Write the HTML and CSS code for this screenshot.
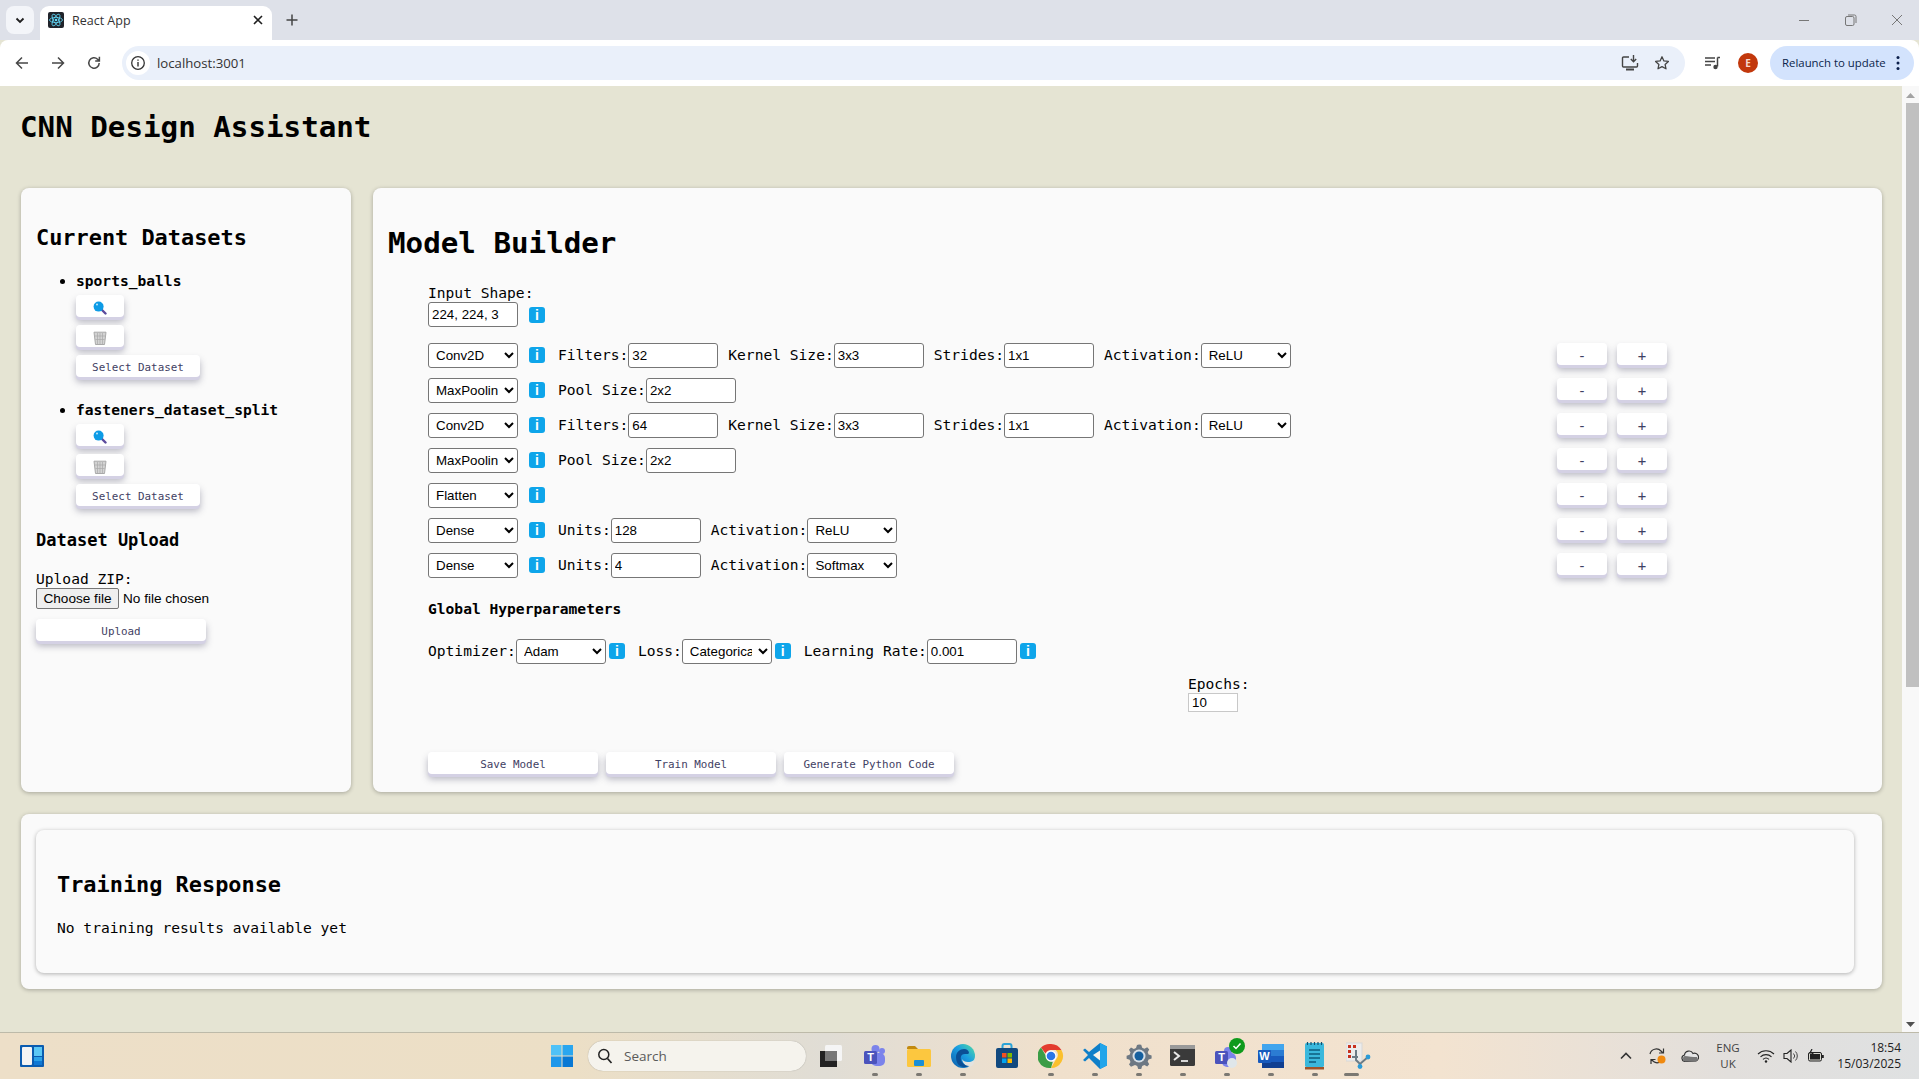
FILE: index.html
```html
<!DOCTYPE html>
<html lang="en">
<head>
    <meta charset="UTF-8">
    <title>React App</title>
    <link rel="stylesheet" href="styles.css">
</head>
<body>
    <!-- browser chrome -->
    <div class="tabstrip">
        <div class="tab-list"><svg width="12" height="12" viewBox="0 0 12 12"><path d="M2.500 4.500 6 8l3.500-3.500" fill="none" stroke="#1f1f1f" stroke-width="1.800"/></svg></div>
        <div class="tab">
            <svg class="favicon" width="16" height="16" viewBox="0 0 16 16"><rect width="16" height="16" rx="2" fill="#20232a"/><g fill="none" stroke="#61dafb" stroke-width=".8"><ellipse cx="8" cy="8" rx="6.500" ry="2.600"/><ellipse cx="8" cy="8" rx="6.500" ry="2.600" transform="rotate(60 8 8)"/><ellipse cx="8" cy="8" rx="6.500" ry="2.600" transform="rotate(120 8 8)"/></g><circle cx="8" cy="8" r="1.300" fill="#61dafb"/></svg>
            <span class="tab-title">React App</span>
            <svg class="tab-close" width="10" height="10" viewBox="0 0 10 10"><path d="M1 1l8 8M9 1 1 9" stroke="#1f1f1f" stroke-width="1.600"/></svg>
        </div>
        <svg class="new-tab" width="12" height="12" viewBox="0 0 12 12"><path d="M6 .5v11M.5 6h11" stroke="#444" stroke-width="1.500"/></svg>
        <div class="window-controls">
            <svg width="12" height="12" viewBox="0 0 12 12"><path d="M1 6.500h10" stroke="#777" stroke-width="1"/></svg>
            <svg width="12" height="12" viewBox="0 0 12 12"><rect x=".5" y="2.500" width="8.500" height="9" rx="1.500" fill="none" stroke="#777"/><path d="M3 1h6.500A1.500 1.500 0 0 1 11 2.500V9" fill="none" stroke="#777"/></svg>
            <svg width="12" height="12" viewBox="0 0 12 12"><path d="M1 1l10 10M11 1 1 11" stroke="#777" stroke-width="1"/></svg>
        </div>
    </div>
    <div class="toolbar">
        <svg class="nav-icon" width="16" height="16" viewBox="0 0 16 16"><path d="M14 8H2.500M8 2.500 2.500 8 8 13.500" fill="none" stroke="#474747" stroke-width="1.500"/></svg>
        <svg class="nav-icon" width="16" height="16" viewBox="0 0 16 16"><path d="M2 8h11.500M8 2.500 13.500 8 8 13.500" fill="none" stroke="#474747" stroke-width="1.500"/></svg>
        <svg class="nav-icon" width="16" height="16" viewBox="0 0 16 16"><path d="M13.200 8A5.200 5.200 0 1 1 11.600 4.200L13.200 5.800M13.400 1.800v4.200H9.200" fill="none" stroke="#474747" stroke-width="1.500"/></svg>
        <div class="omnibox">
            <span class="site-info"><svg width="16" height="16" viewBox="0 0 16 16"><circle cx="8" cy="8" r="6.300" fill="none" stroke="#333" stroke-width="1.300"/><path d="M8 7v4.400M8 4.400v1.400" stroke="#333" stroke-width="1.400"/></svg></span>
            <span class="url">localhost:3001</span>
            <svg class="omni-install" width="18" height="18" viewBox="0 0 18 18"><path d="M8 3H2.500A1 1 0 0 0 1.500 4v8a1 1 0 0 0 1 1h13a1 1 0 0 0 1-1V9" fill="none" stroke="#444" stroke-width="1.400"/><path d="M5 15.500h8" stroke="#444" stroke-width="2"/><path d="M12.500 1v6.500M9.800 5l2.700 2.700L15.200 5" fill="none" stroke="#444" stroke-width="1.400"/></svg>
            <svg class="omni-star" width="16" height="16" viewBox="0 0 16 16"><path d="m8 1.800 1.900 4.100 4.500.5-3.300 3 .9 4.400L8 11.600l-4 2.200.9-4.400-3.300-3 4.500-.5z" fill="none" stroke="#444" stroke-width="1.300" stroke-linejoin="round"/></svg>
        </div>
        <svg class="media" width="16" height="16" viewBox="0 0 16 16"><path d="M0 3h10M0 6.500h10M0 10h6" stroke="#444" stroke-width="1.300"/><path d="M12.500 2.500H15M12.500 2.500v9" fill="none" stroke="#444" stroke-width="1.500"/><circle cx="10.500" cy="12" r="2.200" fill="#444"/></svg>
        <span class="avatar">E</span>
        <div class="relaunch">
            <span class="relaunch-text">Relaunch to update</span>
            <svg width="4" height="16" viewBox="0 0 4 16"><circle cx="2" cy="2.500" r="1.500" fill="#0b1f4b"/><circle cx="2" cy="8" r="1.500" fill="#0b1f4b"/><circle cx="2" cy="13.500" r="1.500" fill="#0b1f4b"/></svg>
        </div>
    </div>

    <div class="viewport">
        <div class="page">
            <h1>CNN Design Assistant</h1>
            <div class="columns">
                <div class="card sidebar">
                    <h2 class="sidebar-title">Current Datasets</h2>
                    <ul class="dataset-list">
                        <li>
                            <strong>sports_balls</strong>
                            <div class="dataset-actions">
                                <button class="btn btn-icon"><svg width="14" height="14" viewBox="0 0 14 14"><path d="m8.500 8.500 4 4" stroke="#5b4a9c" stroke-width="2.400" stroke-linecap="round"/><circle cx="5.600" cy="5.600" r="5" fill="#0d9be6"/><circle cx="4" cy="3.400" r="1" fill="#bfe8fb"/></svg></button>
                                <button class="btn btn-icon"><svg width="14" height="14" viewBox="0 0 14 14"><path d="M1 1.200h12L11.500 13.500h-9z" fill="#d3d3d3" stroke="#a9a9a9"/><path d="M4.500 2v11M7 2v11M9.500 2v11M2 5h10M2.500 8.500h9" stroke="#a9a9a9" stroke-width=".7"/></svg></button>
                                <button class="btn btn-select">Select Dataset</button>
                            </div>
                        </li>
                        <li>
                            <strong>fasteners_dataset_split</strong>
                            <div class="dataset-actions">
                                <button class="btn btn-icon"><svg width="14" height="14" viewBox="0 0 14 14"><path d="m8.500 8.500 4 4" stroke="#5b4a9c" stroke-width="2.400" stroke-linecap="round"/><circle cx="5.600" cy="5.600" r="5" fill="#0d9be6"/><circle cx="4" cy="3.400" r="1" fill="#bfe8fb"/></svg></button>
                                <button class="btn btn-icon"><svg width="14" height="14" viewBox="0 0 14 14"><path d="M1 1.200h12L11.500 13.500h-9z" fill="#d3d3d3" stroke="#a9a9a9"/><path d="M4.500 2v11M7 2v11M9.500 2v11M2 5h10M2.500 8.500h9" stroke="#a9a9a9" stroke-width=".7"/></svg></button>
                                <button class="btn btn-select">Select Dataset</button>
                            </div>
                        </li>
                    </ul>
                    <h3 class="upload-title">Dataset Upload</h3>
                    <label class="stack-label upload-label">Upload ZIP:</label>
                    <div class="file-input">
                        <button class="file-btn">Choose file</button>
                        <span>No file chosen</span>
                    </div>
                    <button class="btn btn-wide upload-btn">Upload</button>
                </div>

                <div class="card builder">
                    <h2 class="builder-title">Model Builder</h2>
                    <div class="builder-body">
                        <label class="stack-label input-shape-label">Input Shape:</label>
                        <div class="row">
                            <input class="ctl" type="text" value="224, 224, 3">
                            <span class="info info-shape">i</span>
                        </div>

                        <div class="layers">
                            <div class="row">
                                <select class="ctl"><option>Conv2D</option></select>
                                <span class="info">i</span>
                                <label class="field-label">Filters:</label><input class="ctl gap" type="text" value="32">
                                <label class="field-label">Kernel Size:</label><input class="ctl gap" type="text" value="3x3">
                                <label class="field-label">Strides:</label><input class="ctl gap" type="text" value="1x1">
                                <label class="field-label">Activation:</label><select class="ctl"><option>ReLU</option></select>
                                <div class="row-btns"><button class="btn btn-step">-</button><button class="btn btn-step">+</button></div>
                            </div>
                            <div class="row">
                                <select class="ctl"><option>MaxPooling2D</option></select>
                                <span class="info">i</span>
                                <label class="field-label">Pool Size:</label><input class="ctl gap" type="text" value="2x2">
                                <div class="row-btns"><button class="btn btn-step">-</button><button class="btn btn-step">+</button></div>
                            </div>
                            <div class="row">
                                <select class="ctl"><option>Conv2D</option></select>
                                <span class="info">i</span>
                                <label class="field-label">Filters:</label><input class="ctl gap" type="text" value="64">
                                <label class="field-label">Kernel Size:</label><input class="ctl gap" type="text" value="3x3">
                                <label class="field-label">Strides:</label><input class="ctl gap" type="text" value="1x1">
                                <label class="field-label">Activation:</label><select class="ctl"><option>ReLU</option></select>
                                <div class="row-btns"><button class="btn btn-step">-</button><button class="btn btn-step">+</button></div>
                            </div>
                            <div class="row">
                                <select class="ctl"><option>MaxPooling2D</option></select>
                                <span class="info">i</span>
                                <label class="field-label">Pool Size:</label><input class="ctl gap" type="text" value="2x2">
                                <div class="row-btns"><button class="btn btn-step">-</button><button class="btn btn-step">+</button></div>
                            </div>
                            <div class="row">
                                <select class="ctl"><option>Flatten</option></select>
                                <span class="info">i</span>
                                <div class="row-btns"><button class="btn btn-step">-</button><button class="btn btn-step">+</button></div>
                            </div>
                            <div class="row">
                                <select class="ctl"><option>Dense</option></select>
                                <span class="info">i</span>
                                <label class="field-label">Units:</label><input class="ctl gap" type="text" value="128">
                                <label class="field-label">Activation:</label><select class="ctl"><option>ReLU</option></select>
                                <div class="row-btns"><button class="btn btn-step">-</button><button class="btn btn-step">+</button></div>
                            </div>
                            <div class="row">
                                <select class="ctl"><option>Dense</option></select>
                                <span class="info">i</span>
                                <label class="field-label">Units:</label><input class="ctl gap" type="text" value="4">
                                <label class="field-label">Activation:</label><select class="ctl"><option>Softmax</option></select>
                                <div class="row-btns"><button class="btn btn-step">-</button><button class="btn btn-step">+</button></div>
                            </div>
                        </div>

                        <h4 class="hyper-title">Global Hyperparameters</h4>
                        <div class="row hyper-row">
                            <label class="field-label">Optimizer:</label><select class="ctl"><option>Adam</option></select>
                            <span class="info info-tight">i</span>
                            <label class="field-label">Loss:</label><select class="ctl"><option>Categorical Crossentropy</option></select>
                            <span class="info info-tight">i</span>
                            <label class="field-label">Learning Rate:</label><input class="ctl" type="text" value="0.001">
                            <span class="info info-tight">i</span>
                        </div>
                        <div class="epochs">
                            <label class="stack-label">Epochs:</label>
                            <input class="epochs-input" type="text" value="10">
                        </div>
                        <div class="builder-actions">
                            <button class="btn btn-wide">Save Model</button>
                            <button class="btn btn-wide">Train Model</button>
                            <button class="btn btn-wide">Generate Python Code</button>
                        </div>
                    </div>
                </div>
            </div>

            <div class="card training">
                <div class="training-box">
                    <h2 class="training-title">Training Response</h2>
                    <p class="training-text">No training results available yet</p>
                </div>
            </div>
        </div>
        <div class="scrollbar">
            <svg width="9" height="5" viewBox="0 0 9 5"><path d="M4.500 0 9 5H0z" fill="#a3a3a3"/></svg>
            <div class="thumb"></div>
            <svg class="arrow-down" width="9" height="5" viewBox="0 0 9 5"><path d="M0 0h9L4.500 5z" fill="#505050"/></svg>
        </div>
    </div>

    <!-- windows taskbar -->
    <div class="taskbar">
        <svg class="widgets" width="24" height="22" viewBox="0 0 24 22"><rect width="24" height="22" rx="1" fill="#0b5cb0"/><rect x="2" y="2" width="10" height="18" rx="1" fill="#f4f4f4"/><rect x="14" y="2" width="8" height="9" fill="#5cc8f5"/><rect x="14" y="12" width="8" height="4" fill="#2ba2e8"/><rect x="14" y="16" width="8" height="4" fill="#0f78d4"/></svg>
        <div class="center-icons">
            <span class="task"><svg width="24" height="24" viewBox="0 0 24 24"><path d="M1 1h10.500v10.500H1z" fill="#50c2f7"/><path d="M12.500 1H23v10.500H12.500z" fill="#2aa6ef"/><path d="M1 12.500h10.500V23H1z" fill="#1e97ea"/><path d="M12.500 12.500H23V23H12.500z" fill="#0878d4"/></svg></span>
            <div class="search">
                <svg width="16" height="16" viewBox="0 0 16 16"><circle cx="6.800" cy="6.500" r="5" fill="none" stroke="#222" stroke-width="1.500"/><path d="m10.500 10.500 4 4.500" stroke="#222" stroke-width="1.700"/></svg>
                <span>Search</span>
            </div>
            <span class="task taskview"><svg width="24" height="24" viewBox="0 0 24 24"><rect x="6" y="1" width="17" height="16" rx="1.500" fill="#f5f5f5"/><rect x="1" y="7" width="17" height="16" fill="#222"/><rect x="6" y="7" width="12" height="10" fill="#777"/></svg></span>
            <span class="task running"><svg width="26" height="26" viewBox="0 0 26 26"><circle cx="20" cy="8" r="3" fill="#7b83eb"/><circle cx="13.500" cy="6" r="4" fill="#7b83eb"/><rect x="9" y="10" width="14" height="13" rx="5" fill="#7b83eb"/><rect x="2" y="8" width="13" height="13" rx="1.500" fill="#4b53bc"/><text x="8.500" y="18" class="icon-letter">T</text></svg></span>
            <span class="task running"><svg width="26" height="26" viewBox="0 0 26 26"><path d="M1 5a2 2 0 0 1 2-2h6l3 3H1z" fill="#c28a10"/><rect x="1" y="6" width="24" height="18" rx="1.500" fill="#fcc73f"/><rect x="8" y="17" width="10" height="6" rx="1" fill="#1a8fd6"/></svg></span>
            <span class="task running"><svg width="26" height="26" viewBox="0 0 26 26"><defs><linearGradient id="edge" x1="0" y1="1" x2="1" y2="0"><stop offset="0" stop-color="#0b5aa8"/><stop offset=".55" stop-color="#1b9de2"/><stop offset="1" stop-color="#54e0a0"/></linearGradient></defs><circle cx="13" cy="13" r="12" fill="url(#edge)"/><path d="M25 14c0 3-3 5-7 5-3 0-5-1-6-3 1 5 5 9 10 7 2-2 3-6 3-9" fill="#e4e3df"/><path d="M6 14c0-5 4-8 8-8 3 0 5 2 5 4 0 1-2 1-4 1-5 0-5 5-3 8 2 3 5 4 7 4-2 1-4 1.500-6 1C8 23 6 19 6 14" fill="#0b4f96"/></svg></span>
            <span class="task"><svg width="24" height="26" viewBox="0 0 24 26"><path d="M7.500 6V3a2 2 0 0 1 2-2h5a2 2 0 0 1 2 2v3" fill="none" stroke="#2aa3d8" stroke-width="2"/><rect x="1" y="5" width="22" height="20" rx="2" fill="#11497f"/><rect x="7" y="10" width="4.500" height="4.500" fill="#f25022"/><rect x="12.500" y="10" width="4.500" height="4.500" fill="#7fba00"/><rect x="7" y="15.500" width="4.500" height="4.500" fill="#00a4ef"/><rect x="12.500" y="15.500" width="4.500" height="4.500" fill="#ffb900"/></svg></span>
            <span class="task running"><svg width="26" height="26" viewBox="0 0 26 26"><path d="M13 1a12 12 0 0 1 10.400 6H13a6 6 0 0 0-5.500 3.500L3 4.600A12 12 0 0 1 13 1" fill="#e33b2e"/><path d="M23.400 7A12 12 0 0 1 13 25l5.200-9a6 6 0 0 0-.5-9z" fill="#fbc02d"/><path d="M3 4.600 8 13a6 6 0 0 0 6.800 5.800L13 25A12 12 0 0 1 3 4.600" fill="#3b9d46"/><circle cx="13" cy="13" r="5.500" fill="#fff"/><circle cx="13" cy="13" r="4.300" fill="#2a76e8"/></svg></span>
            <span class="task running"><svg width="26" height="28" viewBox="0 0 26 28"><path d="M18 1 25 4.500v19L18 27 7 16l-4 3.500-2-1.500 5-5-5-5 2-1.500L7 10z" fill="#0e7fc9"/><path d="M18 1 25 4.500v19L18 27z" fill="#22a5ea"/><path d="M18 8.500 11 13l7 5.500z" fill="#f8f4ea"/></svg></span>
            <span class="task running"><svg width="26" height="26" viewBox="0 0 26 26"><path d="M13 1.500l2.200.2 1 3 2.200 1 2.800-1.500 2 2.300-1.500 2.800.9 2.200 3 .9v3l-3 1-.9 2.200 1.500 2.700-2 2.200-2.800-1.400-2.200.9-1 3h-3l-1-3-2.200-.9L5 23.800l-2-2.200 1.500-2.700-.9-2.200-3-1v-3l3-.9.9-2.200L3 6.800 5 4.500l2.800 1.500L10 5l1-3z" fill="#6d7883"/><circle cx="13" cy="13" r="6.500" fill="#d7dfe6"/><circle cx="13" cy="13" r="4.500" fill="#155f9e"/></svg></span>
            <span class="task running"><svg width="26" height="24" viewBox="0 0 26 24"><rect y="1" width="25" height="21" rx="1.500" fill="#3a3a3a"/><rect y="1" width="25" height="4" fill="#9a9a9a"/><path d="m4 8 5 4-5 4" fill="none" stroke="#e8e8e8" stroke-width="2"/><path d="M11 17h7" stroke="#e8e8e8" stroke-width="1.800"/></svg></span>
            <span class="task running teams-badge"><svg width="26" height="26" viewBox="0 0 26 26"><circle cx="14" cy="8" r="4" fill="#7b83eb"/><rect x="8" y="10" width="14" height="14" rx="5" fill="#7b83eb"/><rect x="1" y="8" width="13" height="13" rx="1.500" fill="#4b53bc"/><text x="7.500" y="18" class="icon-letter">T</text><circle cx="18" cy="20" r="5" fill="#dfe6ea"/></svg><svg class="check" width="16" height="16" viewBox="0 0 16 16"><circle cx="8" cy="8" r="8" fill="#0e9a1c"/><path d="m4.500 8 2.500 2.500 4.500-5" fill="none" stroke="#fff" stroke-width="1.500"/></svg></span>
            <span class="task running"><svg width="26" height="24" viewBox="0 0 26 24"><rect x="4" width="22" height="24" rx="1" fill="#2b7cd3"/><rect x="4" width="22" height="6" fill="#41a5ee"/><rect x="4" y="12" width="22" height="6" fill="#185abd"/><rect x="4" y="18" width="22" height="6" fill="#103f91"/><rect y="6" width="13" height="13" rx="1" fill="#185abd"/><text x="6.500" y="16" class="icon-letter">W</text></svg></span>
            <span class="task running"><svg width="20" height="28" viewBox="0 0 20 28"><rect y="1" width="19" height="24" rx="1.500" fill="#3bb8dc"/><rect y="25" width="19" height="2.500" fill="#a0542a"/><path d="M2.500 0v3M6 0v3M9.500 0v3M13 0v3M16.500 0v3" stroke="#14506e" stroke-width="1.200"/><path d="M4 8h11M4 12h11M4 16h11M4 20h7" stroke="#0e5c7e" stroke-width="1.500"/></svg></span>
            <span class="task running wide"><svg width="26" height="28" viewBox="0 0 26 28"><rect y="1" width="16" height="18" fill="#ececec" stroke="#d8d8d8"/><rect x="2" y="3" width="3" height="3" fill="#c8321e"/><rect x="7" y="3" width="3" height="3" fill="#c8321e"/><rect x="2" y="8" width="3" height="3" fill="#c8321e"/><rect x="2" y="13" width="3" height="3" fill="#c8321e"/><path d="M10 8v10l4 4 8-7M6 15h6" fill="none" stroke="#6b7b86" stroke-width="2"/><circle cx="22" cy="15" r="2.400" fill="#2a9bd8"/><circle cx="14" cy="24.500" r="2.400" fill="#2a9bd8"/></svg></span>
        </div>
        <div class="tray">
            <span class="tray-cell chevron"><svg width="12" height="8" viewBox="0 0 12 8"><path d="m1 6.500 5-5 5 5" fill="none" stroke="#333" stroke-width="1.600"/></svg></span>
            <span class="tray-cell"><svg width="18" height="18" viewBox="0 0 18 18"><path d="M1 7a6.500 6.500 0 0 1 11-3l2 2M14.500 1.500V6H10M14 11a6 6 0 0 1-9.500 3.500L2.500 12.500M2 17v-4.500h4.500" fill="none" stroke="#333" stroke-width="1.200"/><circle cx="12.500" cy="12.500" r="4" fill="#f08a10"/></svg></span>
            <span class="tray-cell"><svg width="18" height="12" viewBox="0 0 18 12"><path d="M4 11.500a3.300 3.300 0 0 1-.5-6.500 4.500 4.500 0 0 1 8.500-1.500 3.900 3.900 0 0 1 3 7.500z" fill="#e6e6e6" stroke="#333" stroke-width="1.200"/><path d="M4 11.500a3 3 0 0 1-.5-5.500c4 .5 8 1 12.500 1 1.500 2 0 4.500-1.500 4.500z" fill="#777"/></svg></span>
            <span class="tray-lang">ENG<br>UK</span>
            <span class="tray-cell small"><svg width="18" height="14" viewBox="0 0 18 14"><path d="M1 5a11.500 11.500 0 0 1 16 0M3.500 7.800a8 8 0 0 1 11 0M6 10.300a4.500 4.500 0 0 1 6 0" fill="none" stroke="#222" stroke-width="1.100"/><circle cx="9" cy="12.500" r="1.200" fill="#222"/></svg></span>
            <span class="tray-cell small"><svg width="16" height="14" viewBox="0 0 16 14"><path d="M1 4.500h3L8 1v12L4 9.500H1z" fill="none" stroke="#222" stroke-width="1.100"/><path d="M10.500 4.500a3.500 3.500 0 0 1 0 5M12.500 2.500a6.500 6.500 0 0 1 0 9" fill="none" stroke="#444" stroke-width="1"/></svg></span>
            <span class="tray-cell small"><svg width="18" height="14" viewBox="0 0 18 14"><rect x="1.500" y="3.500" width="13" height="8.500" rx="1.500" fill="#d8d8d0" stroke="#222"/><rect x="3" y="5" width="10" height="5.500" fill="#222"/><rect x="15" y="6" width="1.800" height="3" fill="#222"/><path d="M5 0 3 4h3L4 8" fill="none" stroke="#222" stroke-width="1.200"/></svg></span>
            <span class="clock">18:54<br>15/03/2025</span>
        </div>
    </div>
</body>
</html>
```

FILE: styles.css
```css
* {
    box-sizing: border-box;
}

html, body {
    margin: 0;
    height: 100%;
}

body {
    width: 1919px;
    height: 1079px;
    overflow: hidden;
    display: flex;
    flex-direction: column;
    background: #e5e4d3;
    font-family: "DejaVu Sans Mono", "Liberation Mono", monospace;
    color: #000;
}

/* browser chrome */
.tabstrip {
    height: 40px;
    flex-shrink: 0;
    display: flex;
    align-items: flex-end;
    background: #dee1e9;
    padding-left: 6px;
}

.tab-list {
    width: 28px;
    height: 28px;
    margin-bottom: 6px;
    border-radius: 8px;
    background: #f3f5f9;
    display: flex;
    align-items: center;
    justify-content: center;
}

.tab {
    width: 232px;
    height: 34px;
    margin-left: 6px;
    padding: 0 9px 6px 8px;
    border-radius: 9px 9px 0 0;
    background: #fff;
    display: flex;
    align-items: center;
}

.favicon {
    flex-shrink: 0;
}

.tab-title {
    margin-left: 8px;
    flex: 1;
    font: 12.5px "Open Sans", sans-serif;
    color: #333;
}

.new-tab {
    margin: 0 0 14px 14px;
}

.window-controls {
    margin-left: auto;
    width: 105px;
    margin-right: 16px;
    margin-bottom: 14px;
    display: flex;
    justify-content: space-between;
}

.toolbar {
    height: 46px;
    flex-shrink: 0;
    display: flex;
    align-items: center;
    background: #fff;
    border-radius: 8px 8px 0 0;
    padding-left: 14px;
}

.nav-icon {
    margin-right: 20px;
}

.omnibox {
    width: 1563px;
    height: 34px;
    border-radius: 17px;
    background: #eaf0fa;
    display: flex;
    align-items: center;
    padding-left: 4px;
}

.site-info {
    width: 24px;
    height: 24px;
    border-radius: 50%;
    background: #fff;
    display: flex;
    align-items: center;
    justify-content: center;
}

.url {
    margin-left: 7px;
    font: 13.2px "Open Sans", sans-serif;
    color: #333;
}

.omni-install {
    margin-left: auto;
}

.omni-star {
    margin: 0 15px 0 15px;
}

.media {
    margin-left: 20px;
}

.avatar {
    width: 20px;
    height: 20px;
    margin-left: 17px;
    border-radius: 50%;
    background: #c2380c;
    color: #f6d9cd;
    font: bold 10px "Open Sans", sans-serif;
    display: flex;
    align-items: center;
    justify-content: center;
}

.relaunch {
    width: 144px;
    height: 34px;
    margin-left: 12px;
    border-radius: 17px;
    background: #d3e3fd;
    color: #0b1f4b;
    font: 11.4px "Open Sans", sans-serif;
    display: flex;
    align-items: center;
    justify-content: space-between;
    padding: 0 14px 0 12px;
}

.relaunch-text {
    margin-bottom: 2px;
}

/* page area */
.viewport {
    height: 946px;
    flex-shrink: 0;
    display: flex;
}

.page {
    width: 1902px;
    padding: 0 20px 0 21px;
    overflow: hidden;
}

.scrollbar {
    width: 17px;
    background: #f8f8f8;
    display: flex;
    flex-direction: column;
    align-items: center;
    padding-top: 7px;
}

.thumb {
    width: 13px;
    height: 584px;
    margin-top: 5px;
    margin-left: 3px;
    background: #c0c0c0;
}

.arrow-down {
    margin-top: auto;
    margin-bottom: 5px;
}

h1 {
    margin: 22px 0 42px -1px;
    font-size: 29.2px;
    line-height: 38px;
}

h2, h3, h4, p {
    margin: 0;
}

.columns {
    display: flex;
    gap: 22px;
    height: 604px;
}

.card {
    background: #fafafa;
    border-radius: 8px;
    box-shadow: 0 1px 4px rgba(0, 0, 0, 0.28);
}

.sidebar {
    width: 330px;
    padding: 37px 15px 0;
}

.sidebar-title, .training-title {
    font-size: 21.9px;
    line-height: 26px;
}

.dataset-list {
    margin: 21px 0 0;
    padding-left: 40px;
    font-size: 14.6px;
    line-height: 18px;
}

.dataset-list li {
    margin-bottom: 24px;
}

.dataset-actions {
    margin-top: 5px;
    display: flex;
    flex-direction: column;
    align-items: flex-start;
    gap: 8px;
}

/* raised white buttons, label sits a little below centre */
.btn {
    height: 22px;
    padding: 3px 0 0;
    border: 0;
    border-radius: 4px;
    background: #fff;
    color: #3f4163;
    font-family: inherit;
    font-size: 10.9px;
    box-shadow: 0 3px 0 #d4d1e4, 0 5px 7px rgba(50, 50, 80, 0.35);
    display: flex;
    align-items: center;
    justify-content: center;
}

.btn-icon {
    width: 48px;
}

.btn-select {
    width: 124px;
}

.btn-wide {
    width: 170px;
}

.btn-step {
    width: 50px;
    font-size: 14px;
}

.upload-title {
    font-size: 17px;
    line-height: 20px;
}

.stack-label {
    display: block;
    font-size: 14.6px;
    line-height: 18px;
}

.upload-label {
    margin-top: 20px;
}

.file-input {
    height: 21px;
    display: flex;
    align-items: center;
    gap: 4px;
    font: 13.6px "Liberation Sans", Arial, sans-serif;
}

.file-btn {
    width: 83px;
    height: 21px;
    padding: 0;
    border: 1px solid #767676;
    border-radius: 2px;
    background: #efefef;
    color: #000;
    font: 13.6px "Liberation Sans", Arial, sans-serif;
}

.upload-btn {
    margin-top: 10px;
}

.builder {
    flex: 1;
    padding: 38px 15px 0;
}

.builder-title {
    font-size: 29.2px;
    line-height: 34px;
}

.builder-body {
    padding-left: 40px;
}

.input-shape-label {
    margin-top: 24px;
}

.row {
    height: 25px;
    display: flex;
    align-items: center;
}

.ctl {
    width: 90px;
    height: 25px;
    flex-shrink: 0;
    border: 1px solid #767676;
    border-radius: 3px;
    background: #fff;
    padding: 0 3px;
    font: 13.33px "Liberation Sans", Arial, sans-serif;
    color: #000;
}

.info {
    width: 16px;
    height: 16px;
    margin: -2px 13px 0 11px;
    flex-shrink: 0;
    border-radius: 3px;
    background: #0ea5ea;
    color: #fff;
    font: bold 14px/16px "Liberation Sans", Arial, sans-serif;
    text-align: center;
}

.info-shape {
    margin-top: 0;
}

.info-tight {
    margin: -2px 13px 0 3px;
}

.field-label {
    padding-bottom: 2px;
    font-size: 14.6px;
    white-space: nowrap;
}

.gap {
    margin-right: 10px;
}

.layers {
    width: 1239px;
    margin-top: 16px;
    display: flex;
    flex-direction: column;
    gap: 10px;
}

.row-btns {
    margin-left: auto;
    align-self: flex-start;
    display: flex;
    gap: 10px;
}

.hyper-title {
    margin-top: 22px;
    font-size: 14.6px;
    line-height: 18px;
}

.hyper-row {
    margin-top: 21px;
}

.epochs {
    margin: 11px 0 0 760px;
}

.epochs-input {
    display: block;
    width: 50px;
    height: 19px;
    border: 1px solid #c8c8c8;
    padding: 0 3px;
    background: #fff;
    font: 13.33px "Liberation Sans", Arial, sans-serif;
}

.builder-actions {
    margin-top: 40px;
    display: flex;
    gap: 8px;
}

.training {
    margin-top: 22px;
    height: 175px;
    padding: 16px 28px 16px 15px;
}

.training-box {
    height: 143px;
    border-radius: 8px;
    background: #fafafa;
    box-shadow: 0 1px 4px rgba(0, 0, 0, 0.3);
    padding: 42px 21px 0;
}

.training-text {
    margin-top: 21px;
    font-size: 14.6px;
    line-height: 18px;
}

/* taskbar */
.taskbar {
    height: 47px;
    flex-shrink: 0;
    border-top: 1px solid #bdbaa9;
    background: linear-gradient(90deg, #eddfc8 0%, #ecdfc6 30%, #e0ddd5 43%, #f0e0cc 55%, #f3e3d0 75%, #e2dfdc 90%, #dfe1e2 100%);
    display: flex;
    align-items: center;
    padding-left: 20px;
}

.center-icons {
    margin-left: 496px;
    display: flex;
    align-items: center;
}

.task {
    position: relative;
    width: 44px;
    height: 46px;
    display: flex;
    align-items: center;
    justify-content: center;
}

.taskview {
    margin-left: 3px;
}

.running::after {
    content: "";
    position: absolute;
    left: 19px;
    bottom: 3px;
    width: 6px;
    height: 3px;
    border-radius: 2px;
    background: #7b7872;
}

.wide::after {
    left: 7px;
    width: 15px;
}

.check {
    position: absolute;
    top: 5px;
    left: 24px;
}

.icon-letter {
    fill: #fff;
    font: bold 11px "Liberation Sans", Arial, sans-serif;
    text-anchor: middle;
}

.search {
    width: 218px;
    height: 30px;
    margin-left: 4px;
    border-radius: 15px;
    background: #f5f3ed;
    box-shadow: 0 0 1px rgba(0, 0, 0, 0.35);
    display: flex;
    align-items: center;
    gap: 11px;
    padding-left: 9px;
    font: 13.5px "Open Sans", sans-serif;
    color: #5a5a5a;
}

.tray {
    width: 309px;
    margin-left: auto;
    padding-right: 18px;
    display: flex;
    align-items: center;
}

.tray-cell {
    width: 32px;
    display: flex;
    justify-content: center;
}

.tray-cell.small {
    width: 25px;
}

.tray-lang {
    width: 44px;
    margin-right: 3px;
    text-align: center;
    font: 11.5px/16px "Open Sans", sans-serif;
    color: #444;
}

.clock {
    margin-left: auto;
    text-align: right;
    font: 12px/16px "Open Sans", sans-serif;
    color: #222;
}
```
